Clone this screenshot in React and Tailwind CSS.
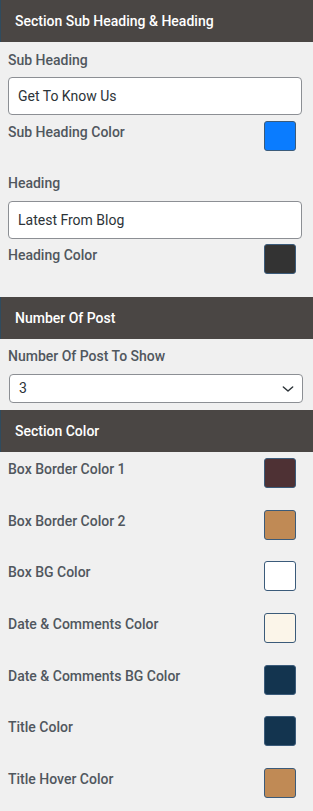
import React from 'react';

const font = { fontFamily: 'Roboto, "Liberation Sans", sans-serif' };

const Header = ({ title, className = '' }) => (
  <div className={`h-[42px] flex items-center pl-[14px] bg-[#4a4644] border-l border-[#2f4b5e] text-white text-[14px] font-medium ${className}`}>
    {title}
  </div>
);

const Swatch = ({ color }) => (
  <div
    className={`w-[32px] h-[30px] rounded-[3px] border border-[#3b5b7a] ${color}`}
  />
);

const ColorRow = ({ label, color, className = '' }) => (
  <div className={`flex justify-between items-start pl-2 pr-[17px] ${className}`}>
    <span className="text-[14px] leading-5 font-medium text-[#50575e] mt-px">{label}</span>
    <Swatch color={color} />
  </div>
);

const Label = ({ children, className = '' }) => (
  <div className={`text-[14px] leading-5 font-medium text-[#50575e] px-2 ${className}`}>{children}</div>
);

const TextInput = ({ value, className = '' }) => (
  <div className={`mx-2 mr-[11px] h-[38px] flex items-center px-[9px] bg-white border border-[#8c8f94] rounded-[4px] text-[14px] text-[#2c3338] ${className}`}>
    {value}
  </div>
);

export default function App() {
  const sectionColors = [
    ['Box Border Color 1', 'bg-[#4e3134]'],
    ['Box Border Color 2', 'bg-[#c08a55]'],
    ['Box BG Color', 'bg-white'],
    ['Date & Comments Color', 'bg-[#fbf5e9]'],
    ['Date & Comments BG Color', 'bg-[#13344f]'],
    ['Title Color', 'bg-[#13344f]'],
    ['Title Hover Color', 'bg-[#c08a55]'],
  ];

  return (
    <div className="w-[313px] min-h-[811px] bg-[#f0f0f0]" style={font}>
      <Header title="Section Sub Heading & Heading" />

      <Label className="mt-2">Sub Heading</Label>
      <TextInput value="Get To Know Us" className="mt-[7px]" />
      <ColorRow label="Sub Heading Color" color="bg-[#0a7cff]" className="mt-[6px]" />

      <Label className="mt-[22px]">Heading</Label>
      <TextInput value="Latest From Blog" className="mt-2" />
      <ColorRow label="Heading Color" color="bg-[#333333]" className="mt-[5px]" />

      <Header title="Number Of Post" className="mt-[23px]" />
      <Label className="mt-[7px]">Number Of Post To Show</Label>
      <div className="ml-[9px] mr-[10px] mt-2 h-[29px] flex items-center justify-between pl-[9px] pr-[7px] bg-white border border-[#8c8f94] rounded-[4px] text-[14px] text-[#2c3338]">
        <span>3</span>
        <svg width="14" height="14" viewBox="0 0 24 24" fill="none" stroke="#2c3338" strokeWidth="2.5" strokeLinecap="round" strokeLinejoin="round">
          <path d="M4 8.5l8 7 8-7" />
        </svg>
      </div>

      <Header title="Section Color" className="mt-[7px]" />
      <div className="flex flex-col gap-[21.67px] mt-[6px]">
        {sectionColors.map(([label, color]) => (
          <ColorRow key={label} label={label} color={color} />
        ))}
      </div>
    </div>
  );
}
